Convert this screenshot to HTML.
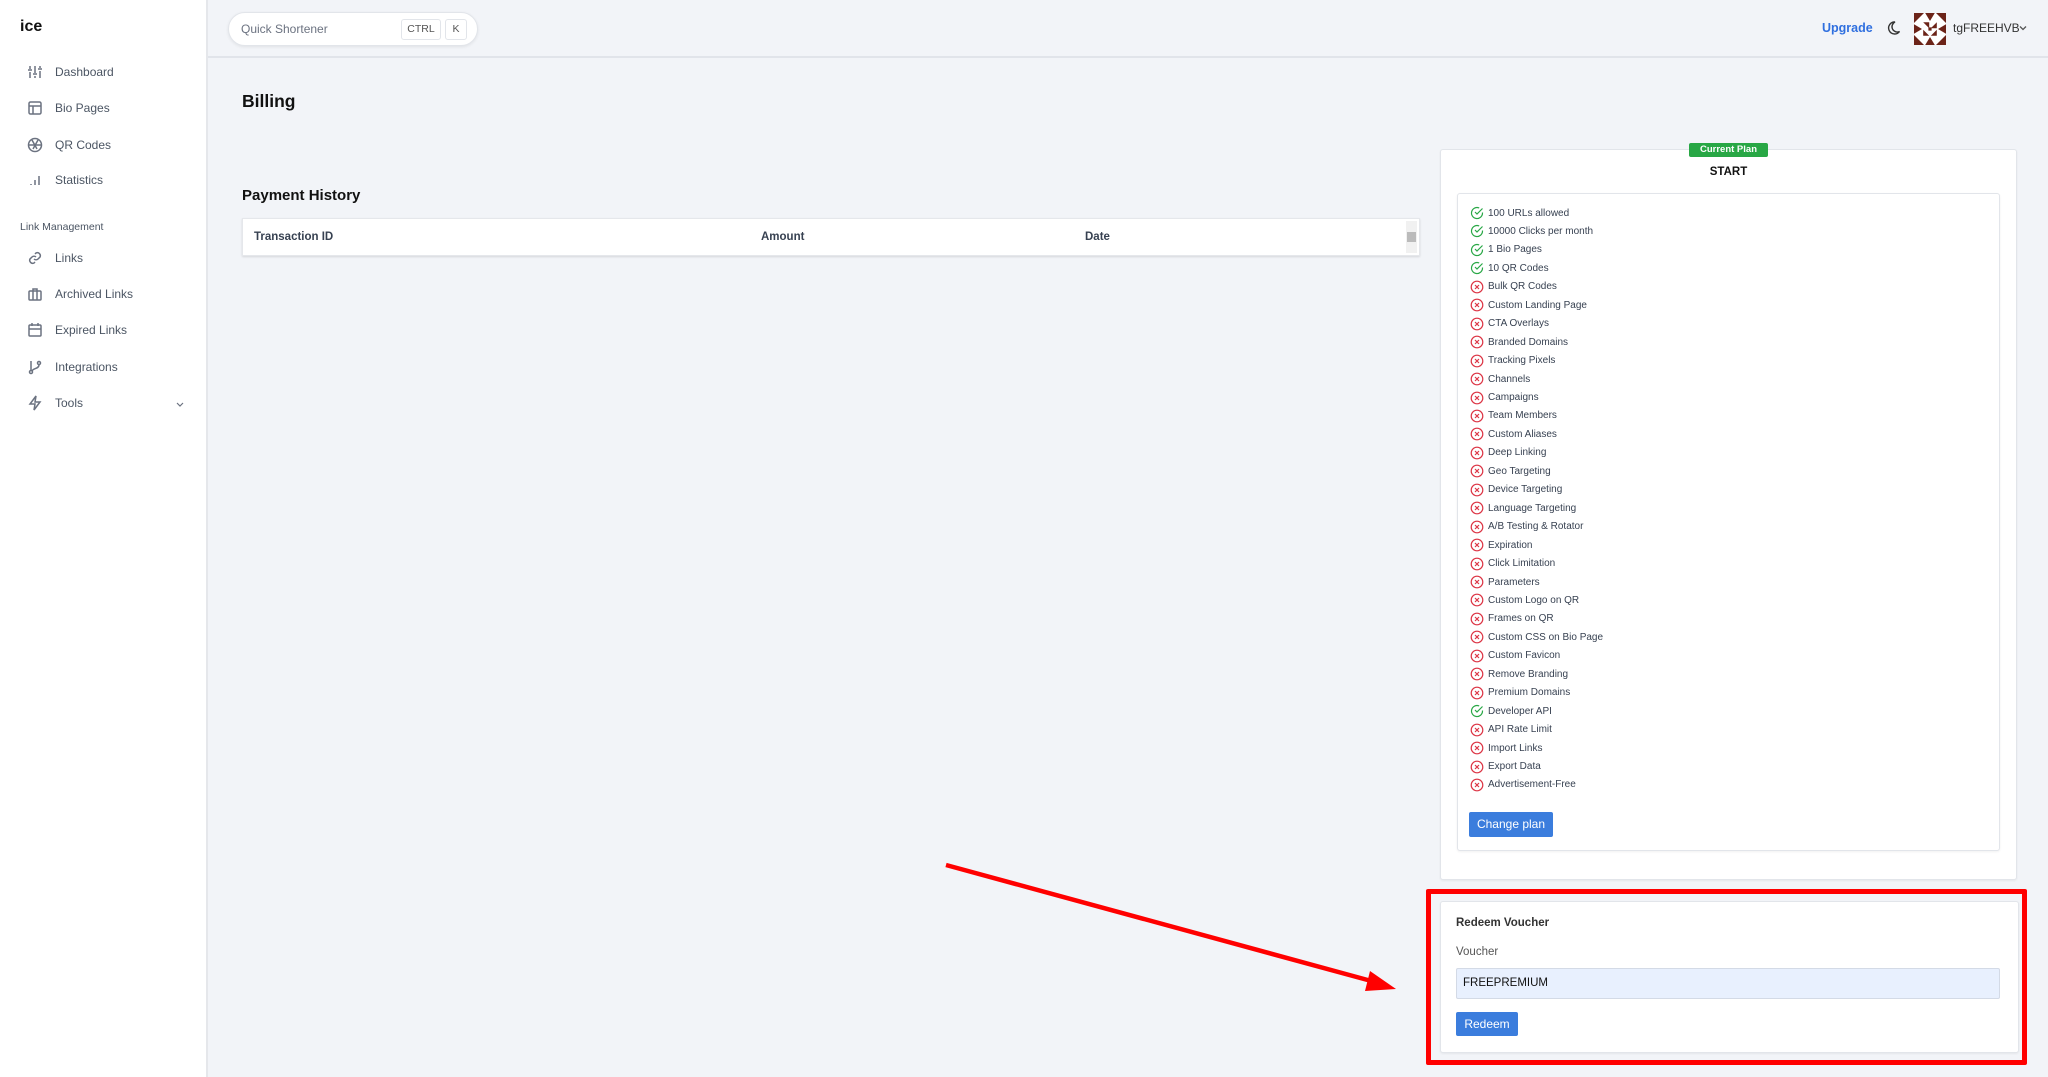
<!DOCTYPE html>
<html><head><meta charset="utf-8"><style>
*{box-sizing:border-box;margin:0;padding:0}
body{width:2048px;height:1077px;overflow:hidden;background:#f2f4f8;font-family:"Liberation Sans",sans-serif;color:#1f2937;position:relative}
.side{position:absolute;left:0;top:0;width:208px;height:1077px;background:#fff;border-right:2px solid #e5e7eb}
.logo{position:absolute;left:20px;top:18px;font-weight:bold;font-size:16px;color:#111}
.item{position:absolute;left:27px;font-size:12px;color:#4b5563;display:flex;align-items:center}
.item svg{width:16px;height:16px;margin-right:12px;stroke:#6b7280;fill:none;stroke-width:1.5}
.sec{position:absolute;left:20px;top:221px;font-size:10.5px;color:#4b5563}
.top{position:absolute;left:208px;top:0;right:0;height:58px;border-bottom:2px solid #e1e4ea}
.search{position:absolute;left:228px;top:12px;width:250px;height:34px;background:#fff;border:1px solid #e2e5ea;border-radius:17px;box-shadow:0 1px 3px rgba(0,0,0,.08)}
.search span.t{position:absolute;left:12px;top:9px;font-size:12px;color:#6b7280}
.kbd{position:absolute;top:6px;height:21px;border:1px solid #e2e5ea;border-radius:3px;font-size:10.5px;color:#555;line-height:19px;text-align:center}
h1{position:absolute;left:242px;top:91px;font-size:17.5px;font-weight:bold;color:#111}
h2{position:absolute;left:242px;top:187px;font-size:15px;font-weight:bold;color:#111}
.table{position:absolute;left:242px;top:218px;width:1178px;height:38px;background:#fff;border:1px solid #e5e7eb;box-shadow:0 1px 2px rgba(0,0,0,.12)}
.th{position:absolute;top:12px;font-size:11.5px;font-weight:bold;color:#374151}
.card{position:absolute;background:#fff;border:1px solid #e2e5ea;border-radius:3px;box-shadow:0 1px 2px rgba(0,0,0,.06)}
.badge{position:absolute;left:1689px;top:143px;width:79px;height:14px;background:#28a745;border-radius:2px;color:#fff;font-size:9.5px;font-weight:bold;text-align:center;line-height:14px}
.feat{position:absolute;left:1470px;font-size:10px;color:#374151;display:flex;align-items:center;height:16px}
.feat svg{width:14px;height:14px;margin-right:4px}
.btn{position:absolute;background:#3b7ddd;color:#fff;border-radius:2px;font-size:12px;text-align:center}
</style></head><body>
<div class="side">
<div class="logo">ice</div>
<div class="item" style="top:64px"><svg viewBox="0 0 16 16"><path d="M3 2v3M3 8v6M8 2v7M8 12v2M13 2v2M13 7v7M1 6h4M6 10h4M11 5h4"/></svg>Dashboard</div>
<div class="item" style="top:100px"><svg viewBox="0 0 16 16"><rect x="2" y="2" width="12" height="12" rx="1.5"/><path d="M2 6h12M6 6v8"/></svg>Bio Pages</div>
<div class="item" style="top:137px"><svg viewBox="0 0 16 16"><circle cx="8" cy="8" r="6.5"/><path d="M5 3l5 9M11 3L6 12M2 8h12"/></svg>QR Codes</div>
<div class="item" style="top:172px"><svg viewBox="0 0 16 16"><path d="M4 13v-1M8 13V8M12 13V4"/></svg>Statistics</div>
<div class="sec">Link Management</div>
<div class="item" style="top:250px"><svg viewBox="0 0 16 16"><path d="M7 9a3 3 0 004 0l2-2a3 3 0 00-4-4l-1 1M9 7a3 3 0 00-4 0L3 9a3 3 0 004 4l1-1"/></svg>Links</div>
<div class="item" style="top:286px"><svg viewBox="0 0 16 16"><rect x="2" y="5" width="12" height="9" rx="1"/><path d="M6 5V3h4v2M6 5v9M10 5v9"/></svg>Archived Links</div>
<div class="item" style="top:322px"><svg viewBox="0 0 16 16"><rect x="2" y="3" width="12" height="11" rx="1"/><path d="M2 7h12M5 1v3M11 1v3"/></svg>Expired Links</div>
<div class="item" style="top:359px"><svg viewBox="0 0 16 16"><circle cx="4" cy="13" r="1.5"/><circle cx="12" cy="4" r="1.5"/><path d="M4 2v9M12 6c0 4-6 3-7 6"/></svg>Integrations</div>
<div class="item" style="top:395px"><svg viewBox="0 0 16 16"><path d="M9 1L3 9h5l-1 6 6-8H8z"/></svg>Tools</div>
<svg style="position:absolute;left:176px;top:400px" width="8" height="8" viewBox="0 0 8 8"><path d="M1 3l3 3 3-3" stroke="#6b7280" fill="none" stroke-width="1.2"/></svg>
</div>
<div class="top"></div>
<div class="search"><span class="t">Quick Shortener</span><div class="kbd" style="left:172px;width:40px">CTRL</div><div class="kbd" style="left:216px;width:22px">K</div></div>
<div style="position:absolute;left:1822px;top:21px;font-size:12.5px;font-weight:bold;color:#2f6fdf">Upgrade</div>
<svg style="position:absolute;left:1886px;top:20px" width="16" height="16" viewBox="0 0 16 16"><path d="M9 2a6 6 0 104.5 9.5A5 5 0 019 2z" fill="none" stroke="#333" stroke-width="1.4"/></svg>
<svg style="position:absolute;left:1914px;top:13px" width="32" height="32" viewBox="0 0 8 8"><rect width="8" height="8" fill="#fff"/><g fill="#6b2318"><path d="M0 0h2.5L0 2.5zM8 0H5.5L8 2.5zM0 8h2.5L0 5.5zM8 8H5.5L8 5.5zM2.8 0h2.4L4 2zM2.8 8h2.4L4 6zM0 2.8v2.4L2 4zM8 2.8v2.4L6 4zM2.3 2.3h1.5v1.5zM5.7 2.3v1.5H4.2zM2.3 5.7h1.5L2.3 4.2zM5.7 5.7H4.2l1.5-1.5zM3.6 3.6h.8v.8h-.8z"/></g></svg>
<div style="position:absolute;left:1953px;top:21px;font-size:12px;color:#333">tgFREEHVB</div>
<svg style="position:absolute;left:2019px;top:24px" width="8" height="8" viewBox="0 0 8 8"><path d="M1 2.5l3 3 3-3" stroke="#555" fill="none" stroke-width="1.3"/></svg>

<h1>Billing</h1>
<h2>Payment History</h2>
<div class="table">
<div class="th" style="left:11px">Transaction ID</div>
<div class="th" style="left:518px">Amount</div>
<div class="th" style="left:842px">Date</div>
<div style="position:absolute;right:2px;top:2px;width:11px;height:32px;background:#f1f1f1"><div style="position:absolute;left:1px;top:11px;width:9px;height:10px;background:#bbb"></div></div>
</div>

<div class="card" style="left:1440px;top:149px;width:577px;height:731px"></div>
<div class="badge">Current Plan</div>
<div style="position:absolute;left:1440px;width:577px;top:166px;text-align:center;font-size:11.5px;font-weight:bold;color:#111">START</div>
<div class="card" style="left:1457px;top:193px;width:543px;height:658px"></div>
<div id="feats"></div>
<div class="btn" style="left:1469px;top:812px;width:84px;height:25px;line-height:25px">Change plan</div>

<div class="card" style="left:1440px;top:901px;width:579px;height:152px"></div>
<div style="position:absolute;left:1456px;top:917px;font-size:11.5px;font-weight:bold;color:#333">Redeem Voucher</div>
<div style="position:absolute;left:1456px;top:946px;font-size:11.5px;color:#555">Voucher</div>
<div style="position:absolute;left:1456px;top:968px;width:544px;height:31px;background:#e8f0fe;border:1px solid #d3dae6;border-radius:2px;font-size:11.5px;color:#111;padding:8px 0 0 6px">FREEPREMIUM</div>
<div class="btn" style="left:1456px;top:1012px;width:62px;height:24px;line-height:24px">Redeem</div>
<div style="position:absolute;left:1426px;top:889px;width:601px;height:176px;border:5px solid #f00;border-radius:2px"></div>
<svg style="position:absolute;left:0;top:0" width="2048" height="1077"><line x1="946" y1="865" x2="1375" y2="982" stroke="#f00" stroke-width="4.5"/><path d="M1396 989L1370 971 1365 991z" fill="#f00"/></svg>
<script>
var f=[["100 URLs allowed",1],["10000 Clicks per month",1],["1 Bio Pages",1],["10 QR Codes",1],["Bulk QR Codes"],["Custom Landing Page"],["CTA Overlays"],["Branded Domains"],["Tracking Pixels"],["Channels"],["Campaigns"],["Team Members"],["Custom Aliases"],["Deep Linking"],["Geo Targeting"],["Device Targeting"],["Language Targeting"],["A/B Testing & Rotator"],["Expiration"],["Click Limitation"],["Parameters"],["Custom Logo on QR"],["Frames on QR"],["Custom CSS on Bio Page"],["Custom Favicon"],["Remove Branding"],["Premium Domains"],["Developer API",1],["API Rate Limit"],["Import Links"],["Export Data"],["Advertisement-Free"]];
var h="";f.forEach(function(x,i){var t=205+i*18.45;var ic=x[1]?'<svg viewBox="0 0 14 14"><path d="M12.5 6.5V7a5.5 5.5 0 11-3.3-5" fill="none" stroke="#28a745" stroke-width="1.2"/><path d="M12.5 2.5L7 8 5 6" fill="none" stroke="#28a745" stroke-width="1.2"/></svg>':'<svg viewBox="0 0 14 14"><circle cx="7" cy="7" r="5.8" fill="none" stroke="#dc3545" stroke-width="1.2"/><path d="M5 5l4 4M9 5l-4 4" stroke="#dc3545" stroke-width="1.2"/></svg>';h+='<div class="feat" style="top:'+t+'px">'+ic+x[0].replace("&","&amp;")+'</div>';});
document.getElementById("feats").innerHTML=h;
</script>
</body></html>
